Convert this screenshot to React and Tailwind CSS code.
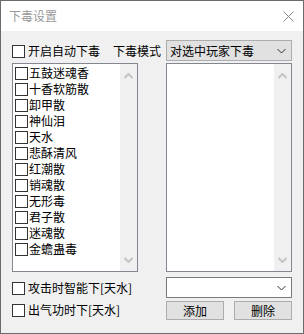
import React from "react";

const FONT = { fontFamily: '"Noto Sans CJK SC", "Microsoft YaHei", sans-serif' };

function Box() {
  return <span className="block w-[13px] h-[13px] border border-[#333333] bg-white shrink-0" />;
}

function Chevron({ color = "#333333" }) {
  return (
    <svg width="9" height="6" viewBox="0 0 9 6" className="shrink-0">
      <path d="M0.5 1 L4.5 5 L8.5 1" fill="none" stroke={color} strokeWidth="1" />
    </svg>
  );
}

function ScrollArrow({ up }) {
  return (
    <svg width="9" height="6" viewBox="0 0 9 6">
      <path
        d={up ? "M0.5 5 L4.5 1 L8.5 5" : "M0.5 1 L4.5 5 L8.5 1"}
        fill="none"
        stroke="#c4c4c4"
        strokeWidth="2"
      />
    </svg>
  );
}

function Scrollbar() {
  return (
    <div className="w-[17px] bg-[#f0f0f0] flex flex-col items-center justify-between pt-[9px] pb-[8px]">
      <ScrollArrow up />
      <ScrollArrow />
    </div>
  );
}

const poisons = [
  "五鼓迷魂香",
  "十香软筋散",
  "卸甲散",
  "神仙泪",
  "天水",
  "悲酥清风",
  "红潮散",
  "销魂散",
  "无形毒",
  "君子散",
  "迷魂散",
  "金蟾蛊毒",
];

export default function App() {
  return (
    <div
      className="w-[304px] h-[334px] border border-[#6b6b6b] bg-[#f0f0f0] flex flex-col text-[12px] leading-[16px] text-black overflow-hidden"
      style={FONT}
    >
      {/* title bar */}
      <div className="h-[30px] bg-white flex items-center justify-between pl-[8px] pr-[9px] shrink-0">
        <span className="text-[#9a9a9a] text-[12px]">下毒设置</span>
        <svg width="11" height="11" viewBox="0 0 11 11">
          <path d="M0.5 0.5 L10.5 10.5 M10.5 0.5 L0.5 10.5" stroke="#8a8a8a" strokeWidth="1" />
        </svg>
      </div>

      {/* body */}
      <div className="flex flex-col pl-[11px] pt-[9px]">
        {/* top row */}
        <div className="flex items-center h-[21px]">
          <div className="w-[101px] flex items-center gap-[3px] pt-[1px]">
            <Box />
            <span>开启自动下毒</span>
          </div>
          <span className="w-[53px]">下毒模式</span>
          <div className="w-[126px] h-[21px] bg-[#e1e1e1] border border-[#adadad] flex items-center justify-between pl-[3px] pr-[5px]">
            <span>对选中玩家下毒</span>
            <Chevron />
          </div>
        </div>

        {/* columns */}
        <div className="flex gap-[28px] mt-[2px]">
          {/* left column */}
          <div className="w-[126px] flex flex-col">
            <div className="h-[209px] border border-[#828790] bg-white flex">
              <div className="flex-1 flex flex-col pt-[1px] pl-[2px]">
                {poisons.map((p) => (
                  <div key={p} className="h-[16px] flex items-center gap-[1px]">
                    <Box />
                    <span>{p}</span>
                  </div>
                ))}
              </div>
              <Scrollbar />
            </div>
            <div className="flex items-center gap-[3px] h-[16px] mt-[8px]">
              <Box />
              <span>攻击时智能下[天水]</span>
            </div>
            <div className="flex items-center gap-[3px] h-[16px] mt-[6px]">
              <Box />
              <span>出气功时下[天水]</span>
            </div>
          </div>

          {/* right column */}
          <div className="w-[126px] flex flex-col">
            <div className="h-[209px] border border-[#828790] bg-white flex">
              <div className="flex-1" />
              <Scrollbar />
            </div>
            <div className="h-[21px] mt-[5px] bg-white border border-[#7a7a7a] flex items-center justify-end pr-[5px]">
              <Chevron />
            </div>
            <div className="flex justify-between mt-[3px]">
              <div className="w-[58px] h-[19px] bg-[#e1e1e1] border border-[#adadad] flex items-center justify-center">
                添加
              </div>
              <div className="w-[58px] h-[19px] bg-[#e1e1e1] border border-[#adadad] flex items-center justify-center">
                删除
              </div>
            </div>
          </div>
        </div>
      </div>
    </div>
  );
}
